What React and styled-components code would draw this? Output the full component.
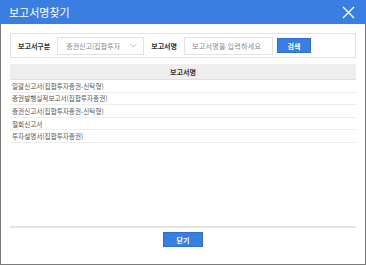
import styled, { createGlobalStyle } from "styled-components";

const GlobalStyle = createGlobalStyle`
  html, body {
    margin: 0;
    padding: 0;
    background: #fff;
  }
  * {
    box-sizing: border-box;
  }
  body {
    font-family: "Noto Sans CJK KR", "Noto Sans", sans-serif;
  }
`;

const Frame = styled.div`
  width: 366px;
  height: 265px;
  display: flex;
  flex-direction: column;
  border: 1px solid #7b7b7b;
  border-top: none;
  background: #fff;
`;

const Header = styled.div`
  height: 24px;
  flex-shrink: 0;
  display: flex;
  align-items: center;
  justify-content: space-between;
  padding: 0 11px 0 9px;
  margin: 0 -1px;
  background: #3b7ee2;
  color: #fff;
`;

const Title = styled.h1`
  margin: 0;
  font-size: 11px;
  font-weight: 400;
  line-height: 1;
`;

const CloseButton = styled.button`
  border: none;
  background: none;
  padding: 0;
  width: 14px;
  height: 14px;
  display: flex;
  align-items: center;
  justify-content: center;
  cursor: pointer;
`;

const Content = styled.div`
  flex: 1;
  display: flex;
  flex-direction: column;
  gap: 6px;
  padding: 9px 9px 0;
`;

const SearchBox = styled.div`
  height: 25px;
  display: flex;
  align-items: center;
  padding: 0 7px;
  border: 1px solid #e2e2e2;
`;

const Label = styled.span`
  font-size: 7px;
  font-weight: 700;
  color: #333;
  margin-right: ${(p) => p.$gap}px;
  white-space: nowrap;
`;

const Select = styled.div`
  width: 87px;
  height: 18px;
  display: flex;
  align-items: center;
  justify-content: space-between;
  padding: 0 6px 0 8px;
  margin-right: 7px;
  border: 1px solid #e2e2e2;
  font-size: 7px;
  color: #8a8a8a;
  overflow: hidden;
  white-space: nowrap;
`;

const Input = styled.div`
  width: 89px;
  height: 18px;
  display: flex;
  align-items: center;
  padding: 0 7px;
  margin-right: 4px;
  border: 1px solid #e2e2e2;
  font-size: 7px;
  color: #888;
  white-space: nowrap;
  letter-spacing: 0.3px;
`;

const BlueButton = styled.button`
  width: ${(p) => p.$w}px;
  height: 15px;
  border: 1px solid #2f6fd4;
  background: #3b7ee2;
  color: #fff;
  font-family: inherit;
  font-size: 7px;
  font-weight: 700;
  padding: 0;
  cursor: pointer;
`;

const Table = styled.div`
  display: flex;
  flex-direction: column;
`;

const HeadRow = styled.div`
  height: 16px;
  display: flex;
  align-items: center;
  justify-content: center;
  background: #eeeeee;
  border-bottom: 1px solid #e0e0e0;
  font-size: 7px;
  font-weight: 700;
  color: #333;
`;

const Row = styled.div`
  height: 12.6px;
  display: flex;
  align-items: center;
  padding: 0 2px;
  border-bottom: 1px solid #ededed;
  font-size: 6.6px;
  color: #555;
  white-space: nowrap;
`;

const Footer = styled.div`
  height: 38px;
  flex-shrink: 0;
  display: flex;
  justify-content: center;
  padding-top: 4px;
  margin: 0 9px;
  border-top: 2px solid #e4e4e4;
`;

const reports = [
  "일괄신고서(집합투자증권-신탁형)",
  "증권발행실적보고서(집합투자증권)",
  "증권신고서(집합투자증권-신탁형)",
  "철회신고서",
  "투자설명서(집합투자증권)",
];

const App = () => {
  return (
    <>
      <GlobalStyle />
      <Frame>
        <Header>
          <Title>보고서명찾기</Title>
          <CloseButton aria-label="닫기">
            <svg width="13" height="13" viewBox="0 0 13 13">
              <path d="M1 1L12 12M12 1L1 12" stroke="#fff" strokeWidth="1.3" />
            </svg>
          </CloseButton>
        </Header>

        <Content>
          <SearchBox>
            <Label $gap={7}>보고서구분</Label>
            <Select>
              <span>증권신고(집합투자</span>
              <svg width="7" height="5" viewBox="0 0 7 5">
                <path d="M0.5 1L3.5 4L6.5 1" stroke="#aaa" strokeWidth="0.8" fill="none" />
              </svg>
            </Select>
            <Label $gap={7}>보고서명</Label>
            <Input>보고서명을 입력하세요</Input>
            <BlueButton $w={34}>검색</BlueButton>
          </SearchBox>

          <Table>
            <HeadRow>보고서명</HeadRow>
            {reports.map((r) => (
              <Row key={r}>{r}</Row>
            ))}
          </Table>
        </Content>

        <Footer>
          <BlueButton $w={40}>닫기</BlueButton>
        </Footer>
      </Frame>
    </>
  );
};

export default App;
